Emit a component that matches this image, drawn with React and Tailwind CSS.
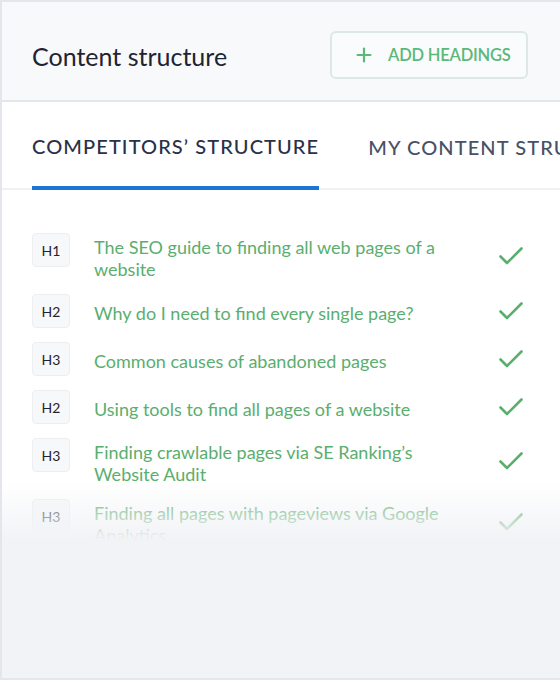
import { Plus } from 'lucide-react';

const rows = [
  { tag: 'H1', text: 'The SEO guide to finding all web pages of a website' },
  { tag: 'H2', text: 'Why do I need to find every single page?' },
  { tag: 'H3', text: 'Common causes of abandoned pages' },
  { tag: 'H2', text: 'Using tools to find all pages of a website' },
  { tag: 'H3', text: 'Finding crawlable pages via SE Ranking’s Website Audit' },
  { tag: 'H3', text: 'Finding all pages with pageviews via Google Analytics' },
];

const Check = () => (
  <svg width="24" height="19" viewBox="0 0 24 19" fill="none">
    <path d="M1.5 9.5 L8 16 L22.5 1.5" stroke="#5aae6e" strokeWidth="2.6" strokeLinecap="round" strokeLinejoin="round" />
  </svg>
);

const App = () => {
  return (
    <div
      className="w-[560px] h-[680px] flex flex-col overflow-hidden border-l-2 border-t-2 border-b-2 border-[#e4e6eb] bg-white"
      style={{ fontFamily: 'Lato, "Noto Sans", sans-serif' }}
    >
      <div className="h-[100px] shrink-0 flex items-center justify-between pl-[30px] pr-[32px] pt-2 bg-[#f8f9fb] border-b-2 border-[#e4e6eb]">
        <h2 className="text-[25px] text-[#1f2433] leading-none pt-[2px]">Content structure</h2>
        <button className="w-[198px] h-[48px] flex items-center gap-[13px] pl-[21px] rounded-[6px] border-2 border-[#dde8e4] bg-[#fafbfc] text-[#5cb87a] text-[16.5px] font-semibold tracking-[-0.2px]">
          <Plus size={22} strokeWidth={2.4} />
          ADD HEADINGS
        </button>
      </div>

      <div className="relative flex-1 flex flex-col">
        <div className="flex gap-[49px] pl-[30px] border-b-2 border-[#f0f1f5] h-[88px] shrink-0 whitespace-nowrap">
          <div className="flex items-center pt-[4px] border-b-4 border-[#1e74d3] -mb-[2px] text-[20px] font-medium tracking-[1.1px] text-[#2a3049]">
            COMPETITORS’ STRUCTURE
          </div>
          <div className="flex items-center pt-[4px] text-[20px] font-medium tracking-[1.1px] text-[#4a5166]">
            MY CONTENT STRUCTURE
          </div>
        </div>

        <div className="flex flex-col gap-[14px] pl-[30px] pr-[37px] pt-[43px]">
          {rows.map((row, i) => (
            <div key={i} className="flex items-start">
              <div className="w-[38px] h-[34px] shrink-0 flex items-center justify-center rounded-[4px] border border-[#eceef2] bg-[#f7f8fa] text-[14px] text-[#1f2433]">
                {row.tag}
              </div>
              <div className="flex-1 min-h-[34px] flex items-center ml-[24px] pt-[3px] text-[18px] leading-[22px] text-[#5aae6e]">
                <span>{row.text}</span>
              </div>
              <div className="ml-[24px] self-center shrink-0">
                <Check />
              </div>
            </div>
          ))}
        </div>

        <div className="absolute left-0 right-0 top-[380px] bottom-0 bg-gradient-to-b from-[#f2f3f6]/0 via-[#f2f3f6] via-[30%] to-[#f2f3f6]" />
      </div>
    </div>
  );
};

export default App;
